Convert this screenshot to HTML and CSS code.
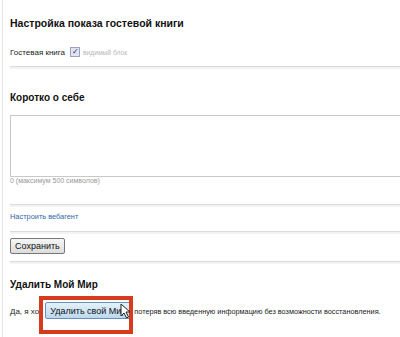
FILE: index.html
```html
<!DOCTYPE html>
<html lang="ru">
<head>
  <meta charset="UTF-8">
  <link rel="stylesheet" href="styles.css">
  <title>Настройки</title>
</head>
<body>
  <main class="page">
    <section class="block first">
      <h3 class="title">Настройка показа гостевой книги</h3>
      <div class="row">
        <span>Гостевая книга</span>
        <span class="check">&#10003;</span>
        <span class="muted">видимый блок</span>
      </div>
    </section>

    <section class="block about">
      <h3 class="gap">Коротко о себе</h3>
      <div class="textarea"></div>
      <p class="hint">0 (максимум 500 символов)</p>
    </section>

    <section class="block link-row">
      <a class="link" href="#">Настроить вебагент</a>
    </section>

    <section class="block save-row">
      <button class="btn">Сохранить</button>
    </section>

    <section class="block last">
      <h3>Удалить Мой Мир</h3>
      <p class="delete">Да, я хоч<span class="focus"><button class="btn blue">Удалить свой Мир</button><span class="frame"></span><svg class="cursor" width="12" height="16" viewBox="0 0 12 16"><path d="M1 1 L1 13 L4 10 L6.5 15 L8.5 14 L6 9 L10 9 Z" fill="#fff" stroke="#222" stroke-width="1"/></svg></span><span class="tail">потеряв всю введенную информацию без возможности восстановления.</span></p>
    </section>
  </main>
</body>
</html>
```

FILE: styles.css
```css
body {
  margin: 0;
  background-color: #fff;
  font-family: 'Liberation Sans', Arial, sans-serif;
  color: #222;
  font-size: 8px;
}

.page {
  margin-left: 2px;
  border-left: 1px solid #e6e6e6;
  padding-left: 7px;
  min-height: 337px;
}

.block {
  border-bottom: 1px solid #dadada;
  box-shadow: 0 2px 0 #f3f3f3;
}

.block h3 {
  margin: 0;
  font-size: 10px;
  font-weight: bold;
  color: #111;
}

.block.first {
  padding: 17px 0 9px;
}

.block h3.title {
  font-size: 10.5px;
}

.row {
  display: flex;
  align-items: center;
  margin-top: 18px;
  font-size: 8px;
}

.check {
  display: inline-flex;
  align-items: center;
  justify-content: center;
  width: 8px;
  height: 8px;
  margin: 0 3px 0 5px;
  border: 1px solid #9aa0c8;
  background-color: #dfe2f2;
  color: #333;
  font-size: 8px;
  line-height: 1;
}

.muted {
  color: #b8b8b8;
  font-size: 6.7px;
}

.block.about {
  padding: 25px 0 20px;
}

.block h3.gap {
  margin-bottom: 12px;
}

.textarea {
  height: 60px;
  border: 1px solid #c8c8c8;
  border-right: none;
}

.hint {
  margin: 0;
  color: #999;
  font-size: 7px;
}

.block.link-row {
  padding: 7px 0 10px;
}

.link {
  color: #3366aa;
  font-size: 7.4px;
  text-decoration: none;
}

.block.save-row {
  padding: 6px 0 7px;
}

.btn {
  font-family: 'Liberation Sans', Arial, sans-serif;
  font-size: 9px;
  color: #111;
  height: 16px;
  padding: 0 4px;
  border: 1px solid #777;
  border-radius: 2px;
  background: linear-gradient(#f6f6f6, #dcdcdc);
}

.block.last {
  padding-top: 17px;
  border-bottom: none;
  box-shadow: none;
}

.delete {
  margin: 12px 0 0;
}

.focus {
  position: relative;
  display: inline-block;
  margin: 0 3px 0 2px;
}

.btn.blue {
  height: 17px;
  border-color: #6a8fb8;
  background: linear-gradient(#e4f1fb, #bcd9f0);
}

.frame {
  position: absolute;
  left: -6px;
  top: -6px;
  width: 94px;
  height: 38px;
  box-sizing: border-box;
  border: 4px solid #d63c1c;
}

.cursor {
  position: absolute;
  left: 75px;
  top: 1px;
}

.tail {
  font-size: 7.3px;
}
```
